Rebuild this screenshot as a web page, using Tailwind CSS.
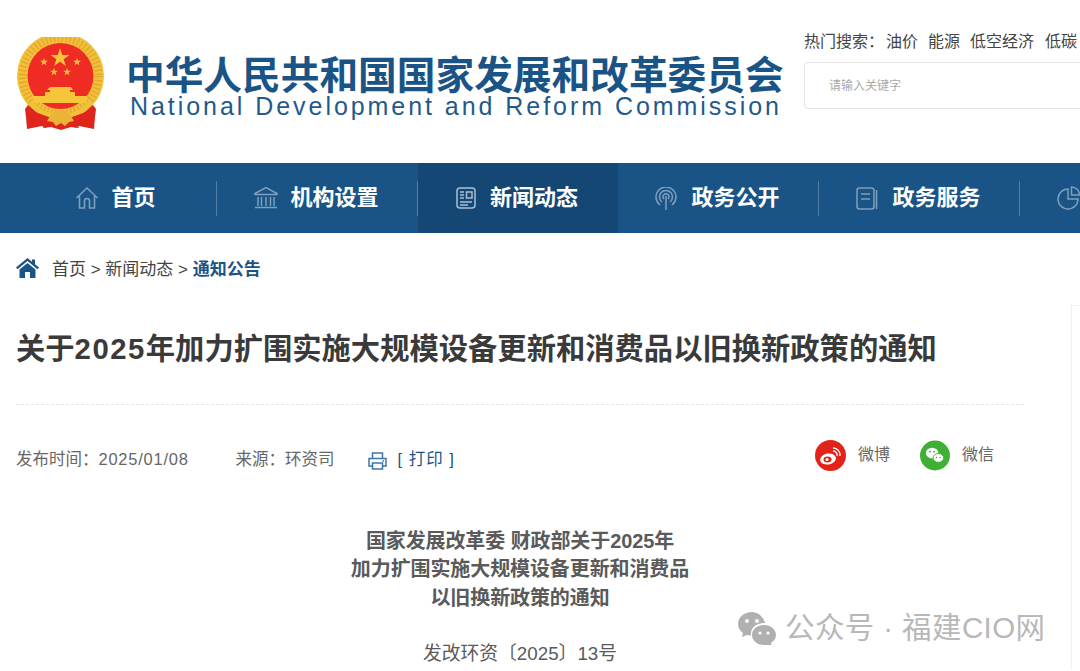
<!DOCTYPE html>
<html lang="zh">
<head>
  <meta charset="UTF-8">
  <title>关于2025年加力扩围实施大规模设备更新和消费品以旧换新政策的通知</title>
  <script src="https://cdn.jsdelivr.net/npm/@tailwindcss/browser@4"></script>
</head>
<body class="relative w-[1080px] h-[671px] overflow-hidden bg-white font-['Liberation_Sans','Noto_Sans_CJK_SC',sans-serif]">

  <!-- header -->
  <header class="h-[163px] flex pl-4 relative">
    <svg class="w-[90px] h-[95px] mt-[37px] shrink-0" viewBox="0 0 90 95">
      <circle cx="44.500" cy="39" r="43.500" fill="#f3c03a"/>
      <circle cx="44.500" cy="39" r="38" fill="none" stroke="#e2a92c" stroke-width="8" stroke-dasharray="1.500 2.500"/>
      <circle cx="44.500" cy="39" r="33" fill="#ee2c24"/>
      <polygon transform="translate(44 21)" fill="#f6c53a" points="0,-10 2.200,-3 9.500,-3.100 3.600,1.200 5.900,8.100 0,3.800 -5.900,8.100 -3.600,1.200 -9.500,-3.100 -2.200,-3"/>
      <polygon transform="translate(28 25) scale(.42)" fill="#f6c53a" points="0,-10 2.200,-3 9.500,-3.100 3.600,1.200 5.900,8.100 0,3.800 -5.900,8.100 -3.600,1.200 -9.500,-3.100 -2.200,-3"/>
      <polygon transform="translate(61 25) scale(.42)" fill="#f6c53a" points="0,-10 2.200,-3 9.500,-3.100 3.600,1.200 5.900,8.100 0,3.800 -5.900,8.100 -3.600,1.200 -9.500,-3.100 -2.200,-3"/>
      <polygon transform="translate(38 35) scale(.42)" fill="#f6c53a" points="0,-10 2.200,-3 9.500,-3.100 3.600,1.200 5.900,8.100 0,3.800 -5.900,8.100 -3.600,1.200 -9.500,-3.100 -2.200,-3"/>
      <polygon transform="translate(51 35) scale(.42)" fill="#f6c53a" points="0,-10 2.200,-3 9.500,-3.100 3.600,1.200 5.900,8.100 0,3.800 -5.900,8.100 -3.600,1.200 -9.500,-3.100 -2.200,-3"/>
      <path d="M34 50h21l2 3h-3v2h5v4h12v7H17v-7h12v-4h5v-2h-3z" fill="#f6c53a"/>
      <path d="M12 68c1 0 6 6 10 8l14 5-6 10-4-2-15 3-1-12-1-8zM77 68c-1 0-6 6-10 8l-14 5 6 10 4-2 15 3 1-12 1-8z" fill="#e0261c"/>
      <path d="M30 83h29l4 8-8-1-10 3-10-3-8 1z" fill="#e0261c"/>
      <path d="M14 65c8 10 19 14 30.500 14S67 75 75 65" fill="none" stroke="#f3c03a" stroke-width="4"/>
      <path d="M36 76c3-3 14-3 17 0l5 8-5 1-4 4-4-3-5 3-3-4-6-1z" fill="#e9b437"/>
    </svg>
    <div class="ml-[20px] w-[656px] shrink-0 pt-[58px]">
      <div class="text-[38.700px] leading-[36px] font-bold text-[#1a5486] whitespace-nowrap">中华人民共和国国家发展和改革委员会</div>
      <div class="text-[25px] leading-[24px] pl-[4px] tracking-[2.950px] text-[#1f5a8c] whitespace-nowrap">National Development and Reform Commission</div>
    </div>
    <div class="ml-[22px] pt-[32px] shrink-0">
      <div class="flex gap-[10px] text-base leading-5 text-[#444] whitespace-nowrap">
        <span class="flex gap-[2px]"><span>热门搜索：</span><span>油价</span></span><span>能源</span><span>低空经济</span><span class="ml-[1px]">低碳</span>
      </div>
      <div class="mt-[10px] w-[300px] h-[47px] border border-[#e2e2e2] rounded flex items-center pl-6 text-xs text-[#aaa]">请输入关键字</div>
    </div>
  </header>

  <!-- nav -->
  <nav class="h-[70px] bg-[#1a5486] flex pl-4 text-white text-[22px] font-bold overflow-hidden">
    <a class="w-[201px] pr-[2px] shrink-0 flex items-center justify-center gap-[12px] relative after:content-[''] after:absolute after:right-0 after:top-[18px] after:h-[35px] after:w-px after:bg-white/25">
      <svg class="w-6 h-6 text-[#7f9fbc]" viewBox="0 0 24 24" fill="none" stroke="currentColor" stroke-width="1.600"><path d="M1.500 12 12 2l10.500 10M4.500 10v12h5v-7a2.500 2.500 0 0 1 5 0v7h5V10"/></svg>
      <span class="mb-[2px]">首页</span>
    </a>
    <a class="w-[201px] pr-[2px] shrink-0 flex items-center justify-center gap-[12px] relative after:content-[''] after:absolute after:right-0 after:top-[18px] after:h-[35px] after:w-px after:bg-white/25">
      <svg class="w-6 h-6 text-[#7f9fbc]" viewBox="0 0 24 24" fill="none" stroke="currentColor" stroke-width="1.500"><path d="M1 7.500 12 1.500l11 6v1H1zM4 11v9M7.500 11v9M12 11v9M16.500 11v9M20 11v9M1 21.500h22"/></svg>
      <span class="mb-[2px]">机构设置</span>
    </a>
    <a class="w-[200px] pr-[2px] shrink-0 flex items-center justify-center gap-[14px] bg-[#154775]">
      <svg class="w-[20px] h-[22px] text-[#a8bfd4]" viewBox="0 0 20 22" fill="none" stroke="currentColor" stroke-width="1.500"><rect x="1" y="1" width="18" height="20" rx="3"/><path d="M4 5h4M4 8h4M4 11h4M4 15h12M4 18h8"/><rect x="10.500" y="5" width="5.500" height="6"/></svg>
      <span class="mb-[2px]">新闻动态</span>
    </a>
    <a class="w-[201px] pr-[2px] shrink-0 flex items-center justify-center gap-[14px] relative after:content-[''] after:absolute after:right-0 after:top-[18px] after:h-[35px] after:w-px after:bg-white/25">
      <svg class="w-[22px] h-[23px] text-[#7f9fbc]" viewBox="0 0 22 23" fill="none" stroke="currentColor" stroke-width="1.500"><path d="M5 18a10 10 0 1 1 12 0M7 15a6.500 6.500 0 1 1 8 0M9 12a3 3 0 1 1 4 0M11 9v14"/></svg>
      <span class="mb-[2px]">政务公开</span>
    </a>
    <a class="w-[201px] pr-[2px] shrink-0 flex items-center justify-center gap-[14px] relative after:content-[''] after:absolute after:right-0 after:top-[18px] after:h-[35px] after:w-px after:bg-white/25">
      <svg class="w-[22px] h-[23px] text-[#7f9fbc]" viewBox="0 0 22 23" fill="none" stroke="currentColor" stroke-width="1.500"><rect x="1" y="1" width="17" height="21" rx="2.500"/><path d="M5 7h9M5 12h9M20.500 3v19"/></svg>
      <span class="mb-[2px]">政务服务</span>
    </a>
    <a class="pl-[37px] shrink-0 flex items-center">
      <svg class="w-6 h-6 text-[#7f9fbc]" viewBox="0 0 24 24" fill="none" stroke="currentColor" stroke-width="1.500"><path d="M11 3a10 10 0 1 0 10 10H11zM14.500 1v8h8a8 8 0 0 0-8-8z"/></svg>
    </a>
  </nav>

  <!-- breadcrumb -->
  <div class="h-[71px] flex items-center pl-4 text-[17px] text-[#444]">
    <svg class="w-[23px] h-[20px] text-[#1a5486] mb-[2px]" viewBox="0 0 23 20" fill="currentColor"><path d="M11.500 0 0 9.500l1.500 1.700 10-8.200 10 8.200 1.500-1.700-4-3.300V1.500h-3v2.200zM3.500 11.500 11.500 5l8 6.500V20h-5.500v-6h-5v6H3.500z"/></svg>
    <span class="ml-[13px] mt-[2px]">首页 &gt; 新闻动态 &gt; <b class="text-[#1a5486]">通知公告</b></span>
  </div>

  <!-- article -->
  <div class="flex">
    <main class="ml-4 w-[1008px] shrink-0">
      <h1 class="text-[29.300px] leading-[44px] mt-[23px] font-bold text-[#3a3a3a] whitespace-nowrap">关于<span class="tracking-[1.500px]">2025</span>年加力扩围实施大规模设备更新和消费品以旧换新政策的通知</h1>
      <div class="mt-[33px] border-t border-dashed border-[#e4e4e4]"></div>
      <div class="flex items-center h-[24px] mt-[42px] text-[16.500px] text-[#666]">
        <span>发布时间：<span class="tracking-[.75px]">2025/01/08</span></span>
        <span class="ml-[47px]">来源：环资司</span>
        <svg class="ml-[33px] w-[19px] h-[18px] mt-[3px] text-[#3f75a6]" viewBox="0 0 19 18" fill="none" stroke="currentColor" stroke-width="1.500"><path d="M4.500 6V1h10v5M4.500 14H1V6.500h17V14h-3.500"/><rect x="4.500" y="11" width="10" height="6"/><path d="M14.500 9h1.500"/></svg>
        <span class="ml-[11px] text-[#1a5486] tracking-[1px] whitespace-pre">[ 打印 ]</span>
        <span class="ml-auto mr-[30px] flex items-center -mt-2 text-base">
          <svg class="w-[31px] h-[31px]" viewBox="0 0 31 31"><circle cx="15.500" cy="15.500" r="15.500" fill="#e2231a"/><ellipse cx="13" cy="19" rx="8" ry="5.500" fill="#fff" transform="rotate(-10 13 19)"/><ellipse cx="12.500" cy="19.500" rx="4" ry="3" fill="#e2231a"/><circle cx="12" cy="19.500" r="1.500" fill="#fff"/><path d="M18 8a7 7 0 0 1 7 8M18 11a4 4 0 0 1 4 5" fill="none" stroke="#fff" stroke-width="1.300"/></svg>
          <span class="ml-[12px]">微博</span>
          <svg class="ml-[30px] w-[30px] h-[31px]" viewBox="0 0 31 31"><circle cx="15.500" cy="15.500" r="15.500" fill="#3eb135"/><ellipse cx="12.500" cy="13" rx="6.500" ry="5.500" fill="#fff"/><ellipse cx="19" cy="18" rx="5.500" ry="4.500" fill="#fff" stroke="#3eb135"/><circle cx="10.500" cy="11.500" r="1" fill="#3eb135"/><circle cx="14.500" cy="11.500" r="1" fill="#3eb135"/><circle cx="17" cy="17.500" r=".8" fill="#3eb135"/><circle cx="21" cy="17.500" r=".8" fill="#3eb135"/></svg>
          <span class="ml-[12px]">微信</span>
        </span>
      </div>
      <div class="mt-[56px] ml-[-16px] w-[1040px] text-center leading-[28.300px] text-[#5a5a5a]">
        <p class="font-bold text-[20px] tracking-[-.1px]">国家发展改革委 财政部关于2025年<br>加力扩围实施大规模设备更新和消费品<br>以旧换新政策的通知</p>
        <p class="mt-[28px] text-[18.800px]">发改环资〔2025〕13号</p>
      </div>
    </main>
    <aside class="ml-[47px] mt-[1px] flex-1 border-l border-t border-[#f0f0f0] h-[365px]"></aside>
  </div>

  <!-- watermark -->
  <div class="absolute left-[737px] top-[611px] flex items-center text-[29.500px] leading-[34px] tracking-[.4px] text-[#b8b8b8] whitespace-nowrap">
    <svg class="w-[40px] h-[34px]" viewBox="0 0 40 34" fill="#b0b0b0"><path d="M15 1C7 1 1 6 1 13c0 4 2 7 5 9l-1 4 5-2 4 .6C13 18 18 12 27 12h1C26.500 6 21 1 15 1z"/><path d="M27 14c-7 0-12 4.500-12 10s5 10 12 10l4 1 4 1-1-4c3-2 5-5 5-8 0-5.500-5-10-12-10z"/><circle cx="10" cy="10" r="2" fill="#fff"/><circle cx="20" cy="10" r="2" fill="#fff"/><circle cx="23" cy="22" r="1.600" fill="#fff"/><circle cx="31" cy="22" r="1.600" fill="#fff"/></svg>
    <span class="ml-[8px]">公众号 · 福建CIO网</span>
  </div>
</body>
</html>
